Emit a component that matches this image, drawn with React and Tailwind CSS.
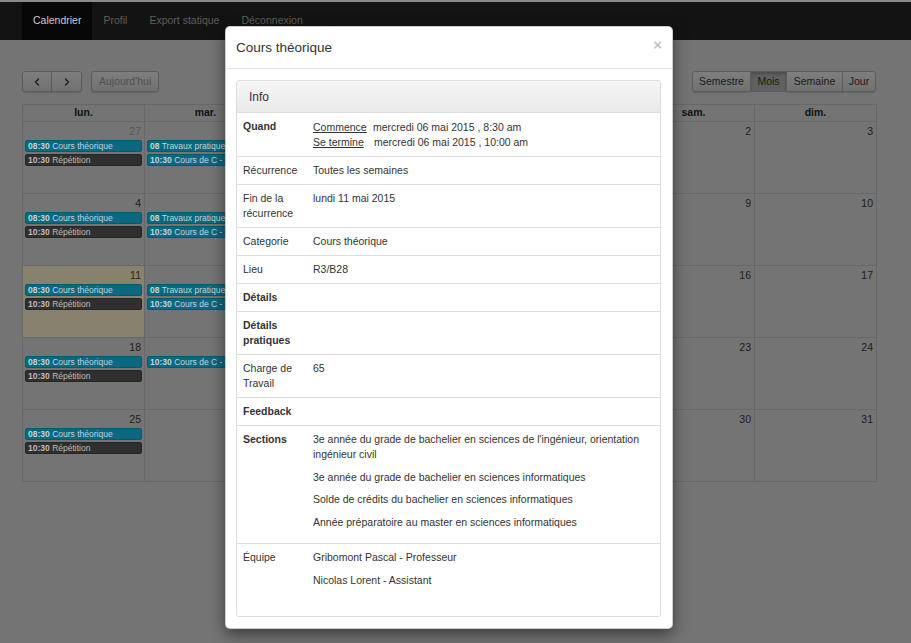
import { ChevronLeft, ChevronRight } from 'lucide-react'

const DAYS = ['lun.', 'mar.', 'mer.', 'jeu.', 'ven.', 'sam.', 'dim.']

const WEEKS = [
  [27, 28, 29, 30, 1, 2, 3],
  [4, 5, 6, 7, 8, 9, 10],
  [11, 12, 13, 14, 15, 16, 17],
  [18, 19, 20, 21, 22, 23, 24],
  [25, 26, 27, 28, 29, 30, 31],
]

const MON = [
  { time: '08:30', title: 'Cours théorique', kind: 'teal' },
  { time: '10:30', title: 'Répétition', kind: 'dark' },
]

// events for the two visible columns left of the modal
function eventsFor(w, d) {
  if (d === 0) return MON
  if (d === 1 && w < 3)
    return [
      { time: '08', title: 'Travaux pratiques', kind: 'teal' },
      { time: '10:30', title: 'Cours de C - théorie', kind: 'teal' },
    ]
  if (d === 1 && w === 3) return [{ time: '10:30', title: 'Cours de C - théorie', kind: 'teal' }]
  return []
}

export default function App() {
  return (
    <div className="relative h-[643px] w-[911px] overflow-hidden bg-[#747474] font-['Liberation_Sans',Arial,sans-serif] text-[10.5px]">
      <TopNav />
      <div className="ml-[22px] w-[855px] pt-[31px]">
        <Toolbar />
        <MonthGrid />
      </div>
      <EventModal />
    </div>
  )
}

function TopNav() {
  const items = ['Calendrier', 'Profil', 'Export statique', 'Déconnexion']
  return (
    <nav className="h-[40px] border-t-2 border-[#8a8a8a] bg-[#131313]">
      <ul className="ml-[22px] flex h-full">
        {items.map((it, i) => (
          <li
            key={it}
            className={
              i === 0
                ? 'flex items-center bg-[#070707] px-[11px] text-[#cdcdcd]'
                : 'flex items-center px-[11px] text-[#5e5e5e]'
            }
          >
            {it}
          </li>
        ))}
      </ul>
    </nav>
  )
}

function Btn({ children, className = '', active, disabled }) {
  return (
    <button
      className={
        'flex h-[21px] items-center justify-center border border-[#5c5c5c] px-[7px] leading-none shadow-[0_1px_1px_rgba(0,0,0,0.12)] ' +
        (active
          ? 'bg-[#606060] text-[#1a1a1a] shadow-[inset_0_2px_3px_rgba(0,0,0,0.2)] '
          : 'bg-gradient-to-b from-[#7e7e7e] to-[#717171] ') +
        (disabled ? 'text-[#4f4f4f] ' : 'text-[#1a1a1a] ') +
        className
      }
    >
      {children}
    </button>
  )
}

function Toolbar() {
  return (
    <div className="flex items-center justify-between">
      <div className="flex items-center">
        <Btn className="w-[30px] rounded-l-[3px]">
          <ChevronLeft size={12} strokeWidth={2.5} />
        </Btn>
        <Btn className="-ml-px w-[31px] rounded-r-[3px]">
          <ChevronRight size={12} strokeWidth={2.5} />
        </Btn>
        <Btn className="ml-[9px] rounded-[3px]" disabled>
          Aujourd'hui
        </Btn>
      </div>
      <div className="mr-px flex items-center">
        <Btn className="w-[59px] rounded-l-[3px]">Semestre</Btn>
        <Btn className="-ml-px w-[37px]" active>
          Mois
        </Btn>
        <Btn className="-ml-px w-[57px]">Semaine</Btn>
        <Btn className="-ml-px w-[34px] rounded-r-[3px]">Jour</Btn>
      </div>
    </div>
  )
}

function MonthGrid() {
  return (
    <div className="mt-[12px] border-l border-t border-[#686868]">
      <div className="grid h-[17px] grid-cols-7">
        {DAYS.map((d) => (
          <div
            key={d}
            className="flex items-center justify-center border-b border-r border-[#686868] font-bold text-[#111]"
          >
            {d}
          </div>
        ))}
      </div>
      {WEEKS.map((week, w) => (
        <div key={w} className="grid h-[72px] grid-cols-7">
          {week.map((n, d) => {
            const today = w === 2 && d === 0
            const other = w === 0 && d === 0
            return (
              <div
                key={d}
                className={
                  'overflow-hidden border-b border-r border-[#686868] ' + (today ? 'bg-[#86826e]' : '')
                }
              >
                <div
                  className={
                    'pr-[3px] pt-[1px] text-right leading-[16px] ' +
                    (other ? 'text-[#555]' : today ? 'text-[#3b1c1c]' : 'text-[#1c1c1c]')
                  }
                >
                  {n}
                </div>
                <div className="mt-[1px] flex flex-col gap-[2px]">
                  {eventsFor(w, d).map((ev) => (
                    <CalEvent key={ev.time + ev.title} ev={ev} />
                  ))}
                </div>
              </div>
            )
          })}
        </div>
      ))}
    </div>
  )
}

function CalEvent({ ev }) {
  const teal = ev.kind === 'teal'
  return (
    <div
      className={
        'mx-[2px] h-[12px] overflow-hidden whitespace-nowrap rounded-[2px] border px-[2px] text-[8.5px] leading-[10px] ' +
        (teal ? 'border-[#075a6d] bg-[#0a6880] text-[#c6d3d7]' : 'border-[#262626] bg-[#2f2f2f] text-[#bdbdbd]')
      }
    >
      <span className="font-bold">{ev.time}</span> {ev.title}
    </div>
  )
}

function Row({ label, bold, children, first }) {
  return (
    <div className={'flex ' + (first ? '' : 'border-t border-[#dddddd]')}>
      <div className={'w-[70px] shrink-0 px-[6px] py-[6px] leading-[15px] ' + (bold ? 'font-bold' : '')}>
        {label}
      </div>
      <div className="flex-1 px-[6px] py-[6px] leading-[15px]">{children}</div>
    </div>
  )
}

function EventModal() {
  return (
    <div className="absolute left-[225px] top-[26px] w-[448px] rounded-[5px] border border-black/20 bg-white text-[#333] shadow-[0_5px_15px_rgba(0,0,0,0.5)]">
      <div className="flex justify-between border-b border-[#e5e5e5] px-[10px] pb-[10px] pt-[11px]">
        <h4 className="text-[13.5px] leading-[20px]">Cours théorique</h4>
        <span className="-mt-[3px] text-[15px] font-bold leading-[20px] text-[#c4c4c4]">×</span>
      </div>
      <div className="p-[11px] pl-[10px]">
        <div className="rounded-[3px] border border-[#dddddd] pb-[15px]">
          <div className="flex h-[32px] items-center rounded-t-[3px] border-b border-[#dddddd] bg-gradient-to-b from-[#f6f6f6] to-[#e9e9e9] px-[12px] text-[12px] text-[#4b2a2a]">
            Info
          </div>
          <Row label="Quand" bold first>
            <div className="pt-[1px]">
              <div className="flex">
                <span className="w-[60px] shrink-0">
                  <span className="underline">Commence</span>
                </span>
                <span>mercredi 06 mai 2015 , 8:30 am</span>
              </div>
              <div className="flex">
                <span className="w-[61px] shrink-0">
                  <span className="underline">Se termine</span>
                </span>
                <span>mercredi 06 mai 2015 , 10:00 am</span>
              </div>
            </div>
          </Row>
          <Row label="Récurrence">Toutes les semaines</Row>
          <Row label="Fin de la récurrence">lundi 11 mai 2015</Row>
          <Row label="Categorie">Cours théorique</Row>
          <Row label="Lieu">R3/B28</Row>
          <Row label="Détails" bold />
          <Row label="Détails pratiques" bold />
          <Row label="Charge de Travail">65</Row>
          <Row label="Feedback" bold />
          <Row label="Sections" bold>
            <p className="mb-[7.5px]">
              3e année du grade de bachelier en sciences de l'ingénieur, orientation ingénieur civil
            </p>
            <p className="mb-[7.5px]">3e année du grade de bachelier en sciences informatiques</p>
            <p className="mb-[7.5px]">Solde de crédits du bachelier en sciences informatiques</p>
            <p className="mb-[7.5px]">Année préparatoire au master en sciences informatiques</p>
          </Row>
          <Row label="Équipe">
            <p className="mb-[7.5px]">Gribomont Pascal - Professeur</p>
            <p className="mb-[7.5px]">Nicolas Lorent - Assistant</p>
          </Row>
        </div>
      </div>
    </div>
  )
}
